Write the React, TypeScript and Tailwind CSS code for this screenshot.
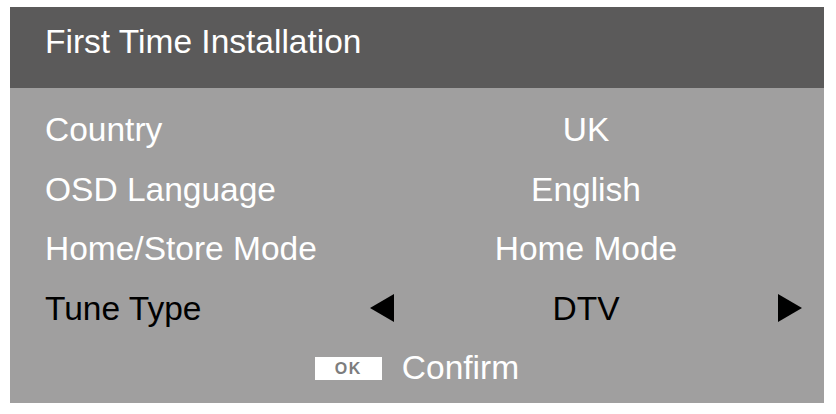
import React from "react"

const rows = [
  { label: "Country", value: "UK" },
  { label: "OSD Language", value: "English" },
  { label: "Home/Store Mode", value: "Home Mode" },
]

function Arrow({ dir }: { dir: "left" | "right" }) {
  return (
    <svg width="24" height="28" viewBox="0 0 24 28" className="shrink-0">
      {dir === "left" ? (
        <polygon points="0,14 24,0 24,28" fill="#000" />
      ) : (
        <polygon points="24,14 0,0 0,28" fill="#000" />
      )}
    </svg>
  )
}

export default function App() {
  return (
    <div
      className="h-[414px] w-[836px] bg-white pl-[10px] pt-[7px]"
      style={{ fontFamily: '"Liberation Sans", Arial, sans-serif' }}
    >
      <div className="w-[814px]">
        {/* header */}
        <div className="h-[81px] bg-[#5b5a5a] pl-[35px] pt-[17px]">
          <h1 className="text-[33.5px] leading-[36px] text-white">
            First Time Installation
          </h1>
        </div>
        {/* body */}
        <div className="h-[315px] bg-[#a09f9f] pt-[12px] text-[33.5px]">
          {rows.map((row) => (
            <div
              key={row.label}
              className="flex h-[59.5px] items-center pl-[35px] pr-[22px] leading-[59.5px] text-white"
            >
              <span className="w-[325px] shrink-0">{row.label}</span>
              <span className="w-[24px] shrink-0" />
              <span className="flex-1 text-center">{row.value}</span>
              <span className="w-[24px] shrink-0" />
            </div>
          ))}
          <div className="flex h-[59.5px] items-center pl-[35px] pr-[22px] leading-[59.5px] text-black">
            <span className="w-[325px] shrink-0">Tune Type</span>
            <Arrow dir="left" />
            <span className="flex-1 text-center">DTV</span>
            <Arrow dir="right" />
          </div>
          <div className="flex h-[59.5px] items-center justify-center gap-[20px] leading-[59.5px] text-white">
            <span className="mt-[2px] flex h-[23px] w-[67px] items-center justify-center bg-white text-[16px] font-bold leading-none tracking-[1.5px] text-[#7d7d7d]">
              OK
            </span>
            <span>Confirm</span>
          </div>
        </div>
      </div>
    </div>
  )
}
